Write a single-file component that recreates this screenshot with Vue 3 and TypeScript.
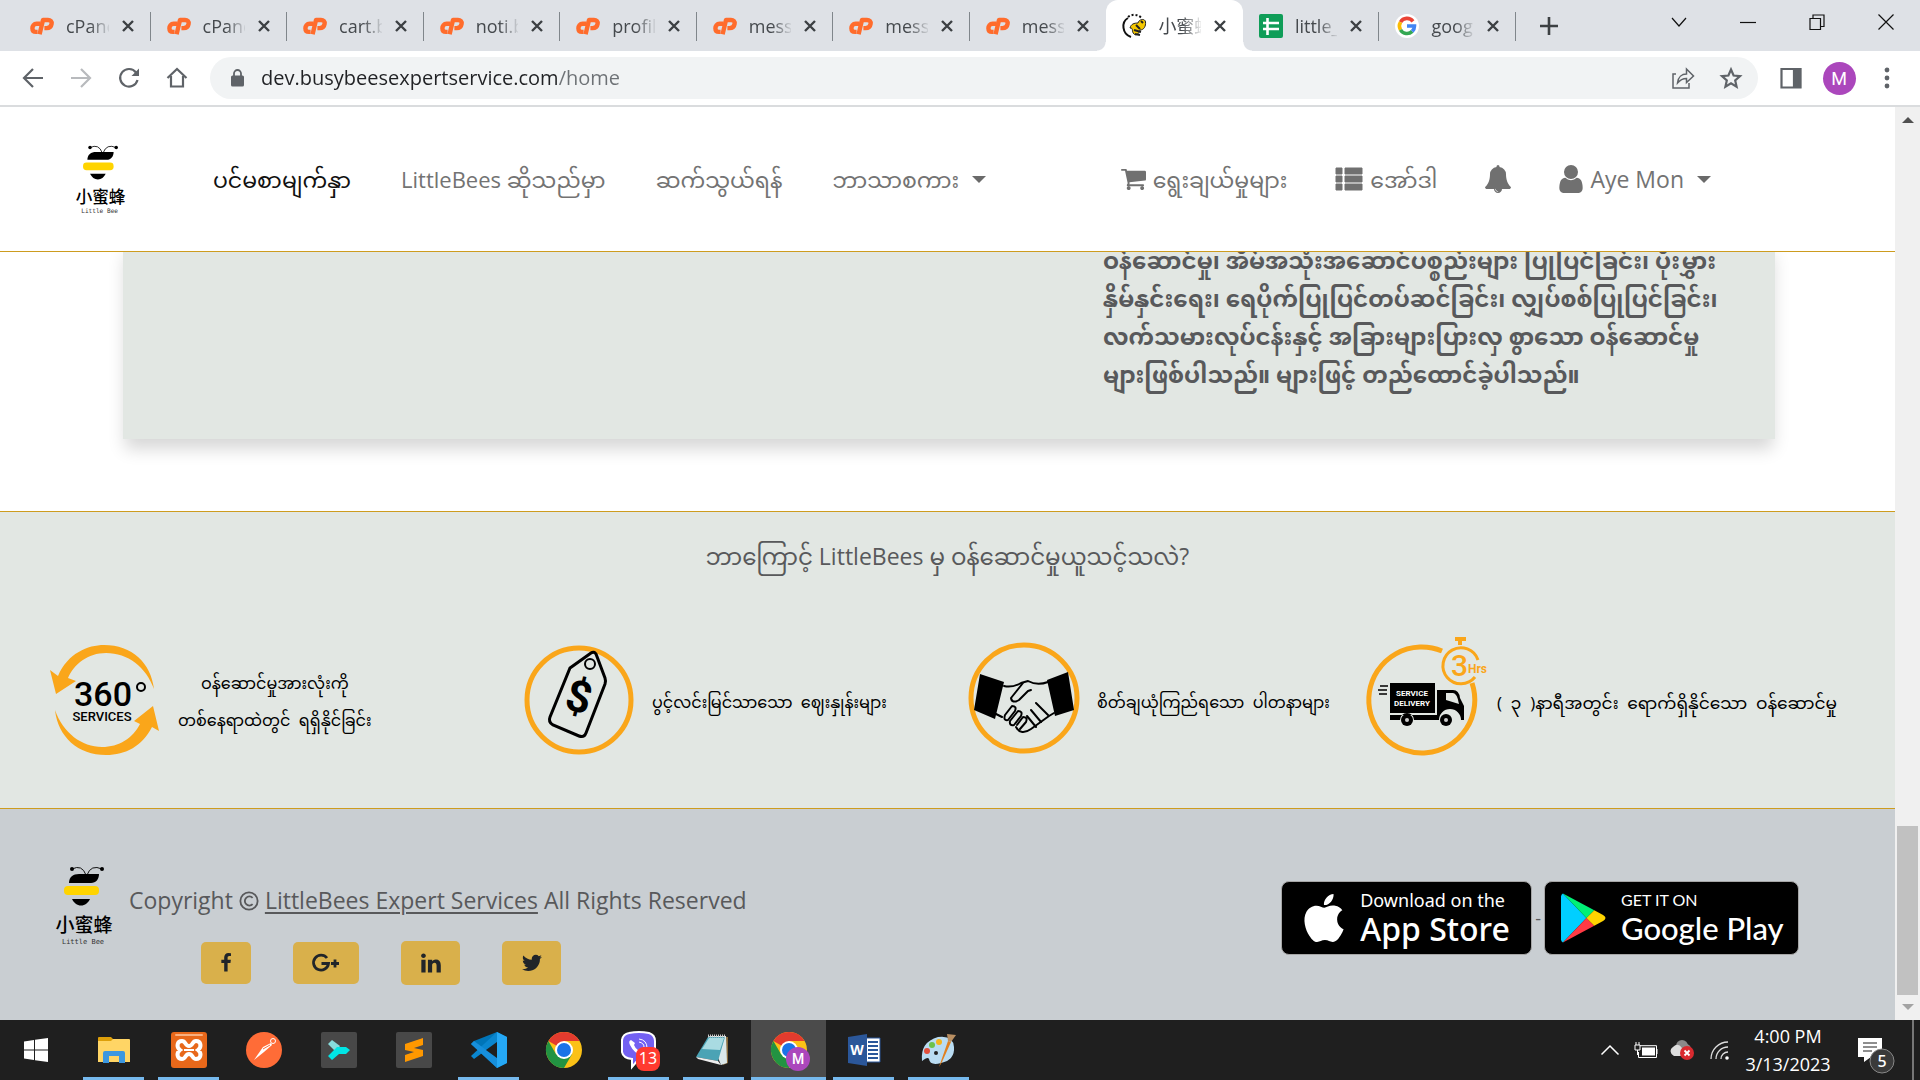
<script setup lang="ts">
import { ref } from 'vue'

interface Tab {
  icon: 'cp' | 'bee' | 'sheet' | 'google'
  title: string
  active?: boolean
}

const tabs: Tab[] = [
  { icon: 'cp', title: 'cPanel' },
  { icon: 'cp', title: 'cPanel' },
  { icon: 'cp', title: 'cart.blade' },
  { icon: 'cp', title: 'noti.blade' },
  { icon: 'cp', title: 'profile' },
  { icon: 'cp', title: 'messages' },
  { icon: 'cp', title: 'messages' },
  { icon: 'cp', title: 'messages' },
  { icon: 'bee', title: '小蜜蜂', active: true },
  { icon: 'sheet', title: 'little_bee' },
  { icon: 'google', title: 'google' },
]

const url = ref('dev.busybeesexpertservice.com/home')

interface App {
  name: string
  open?: boolean
  active?: boolean
}

const apps: App[] = [
  { name: 'explorer', open: true },
  { name: 'xampp', open: true },
  { name: 'postman' },
  { name: 'terminal' },
  { name: 'sublime' },
  { name: 'vscode', open: true },
  { name: 'chrome' },
  { name: 'viber', open: true },
  { name: 'notepad', open: true },
  { name: 'chrome-m', open: true, active: true },
  { name: 'word', open: true },
  { name: 'paint', open: true },
]
</script>

<template>
  <div class="screen">
    <header class="strip">
      <div class="tabs">
        <div v-for="(tab, i) in tabs" :key="i" class="tab" :class="{ active: tab.active, before: tabs[i + 1]?.active }">
          <svg class="fav" viewBox="0 0 24 24">
            <g v-if="tab.icon === 'cp'" fill="none" stroke="#ff6c2c" stroke-width="4.4" stroke-linejoin="round">
              <path d="M10.500 9.700H6.600C3.900 9.700 2.400 12 2.400 14.200C2.400 16.600 3.800 17.900 6 17.900H7.600" />
              <path d="M9.600 20.300L13 6H18C20.500 6 22 7.600 21.600 9.900C21.200 12.600 19.300 14.100 16.600 14.100H14.400" />
            </g>
            <g v-else-if="tab.icon === 'bee'">
              <path d="M6 4C-1 8 0 20 9 23" fill="none" stroke="#111" stroke-width="2" />
              <path d="M6 3C10 0 15 0 19 3.500" fill="none" stroke="#111" stroke-width="2" stroke-dasharray="2 2" />
              <path d="M16 9C17 5 23 4 23.500 8C24 12 22 16 18 16C17 20 14 22 12 20C9 17 12 14 8 14C9 10 12 9 16 9Z" fill="#f5c800" stroke="#222" />
              <path d="M12 16L19 18M13 20L18 21M14 11L18 15M19 7L21 9" stroke="#222" stroke-width="2" />
            </g>
            <g v-else-if="tab.icon === 'sheet'">
              <rect width="24" height="24" rx="2" fill="#0f9d58" />
              <path d="M4 9H20M8.500 4V21M4 15H20" stroke="#fff" stroke-width="2.600" fill="none" />
            </g>
            <g v-else>
              <circle cx="12" cy="12" r="12" fill="#fff" />
              <g fill="none" stroke-width="3.600">
                <path d="M18 7.300A7.500 7.500 0 0 0 5.500 8.200" stroke="#ea4335" />
                <path d="M5.500 8.200A7.500 7.500 0 0 0 5.500 15.800" stroke="#fbbc05" />
                <path d="M5.500 15.800A7.500 7.500 0 0 0 17.200 17.400" stroke="#34a853" />
                <path d="M17.200 17.400A7.500 7.500 0 0 0 19.500 12H12" stroke="#4285f4" />
              </g>
            </g>
          </svg>
          <span class="title">{{ tab.title }}</span>
          <button class="close" aria-label="Close tab">
            <svg viewBox="0 0 14 14"><path d="M2 2L12 12M12 2L2 12" /></svg>
          </button>
        </div>
      </div>
      <button class="plus" aria-label="New tab">
        <svg viewBox="0 0 18 18"><path d="M9 0V18M0 9H18" /></svg>
      </button>
      <div class="wincontrols">
        <button aria-label="Search tabs"><svg viewBox="0 0 16 16"><path d="M1 4L8 12L15 4" /></svg></button>
        <button aria-label="Minimize"><svg viewBox="0 0 16 16"><path d="M0 8.500H16" /></svg></button>
        <button aria-label="Restore"><svg viewBox="0 0 16 16"><path d="M1 4.500H11.500V15.500H1ZM4 4.500V1H15V12.500H11.500" /></svg></button>
        <button aria-label="Close"><svg viewBox="0 0 16 16"><path d="M0.500 0.500L15.500 15.500M15.500 0.500L0.500 15.500" /></svg></button>
      </div>
    </header>

    <div class="toolbar">
      <button class="tool" aria-label="Back"><svg viewBox="0 0 24 24"><path d="M22 12H3M12 3L3 12L12 21" /></svg></button>
      <button class="tool dim" aria-label="Forward"><svg viewBox="0 0 24 24"><path d="M2 12H21M12 3L21 12L12 21" /></svg></button>
      <button class="tool" aria-label="Reload"><svg viewBox="0 0 24 24"><path d="M19 6.500A8.800 8.800 0 1 0 20.500 14" /><path d="M22 2.500V10H14.500Z" class="tip" /></svg></button>
      <button class="tool" aria-label="Home"><svg viewBox="0 0 24 24"><path d="M2.500 12L12 3L21.500 12M6 10V20.500H18V10" /></svg></button>
      <div class="omnibox">
        <svg class="lock" viewBox="0 0 13 18"><rect y="6.500" width="13" height="11" rx="1.500" fill="#5f6368" /><path d="M3 7V4.500A3.500 3.500 0 0 1 10 4.500V7" fill="none" stroke="#5f6368" stroke-width="1.800" /></svg>
        <input v-model="url" class="url" aria-label="Address" type="text" />
        <button class="tool" aria-label="Share"><svg class="thin" viewBox="0 0 24 24"><path d="M5 8H2V22H18V17" /><path d="M6.500 17C7 11 11 8 15.500 8V3L22.500 10L15.500 16.500V12.500C11.500 12.500 9 14 6.500 17Z" /></svg></button>
        <button class="tool" aria-label="Bookmark"><svg viewBox="0 0 24 24"><path d="M12 3.500L14.600 9.500L21 10.100L16.200 14.400L17.600 20.700L12 17.400L6.400 20.700L7.800 14.400L3 10.100L9.400 9.500Z" /></svg></button>
      </div>
      <button class="tool" aria-label="Side panel"><svg viewBox="0 0 24 24"><path d="M2.500 3H21.500V21.500H2.500Z" /><path class="solid" d="M15 3H21V21H15Z" /></svg></button>
      <button class="tool" aria-label="Profile"><span class="avatar">M</span></button>
      <button class="tool" aria-label="Menu"><svg viewBox="0 0 24 24"><circle class="solid" cx="12" cy="4" r="1.300" /><circle class="solid" cx="12" cy="12" r="1.300" /><circle class="solid" cx="12" cy="20" r="1.300" /></svg></button>
    </div>

    <div class="viewport">
      <div class="page">
        <nav class="navbar">
          <a class="brand" href="#" aria-label="Little Bee">
            <svg class="logo" viewBox="0 0 56 79">
              <g fill="none" stroke="#111" stroke-width="1"><path d="M16 3Q26 -2 30 9M46 3Q35 -2 31 9" /></g>
              <circle cx="16" cy="3" r="2" /><circle cx="46" cy="3" r="2" />
              <path d="M13 17C13 11 17 8 23 8H43C43 13 40 17 35 17Z" />
              <rect x="8" y="20" width="35" height="9" rx="4" fill="#ffd400" />
              <path d="M16 33H34C32 37 29 39.500 25 39.500S18 37 16 33Z" />
              <text x="28" y="66" class="zh">小蜜蜂</text>
              <text x="27" y="78" class="en">Little Bee</text>
            </svg>
          </a>
          <div class="links">
            <a class="current" href="#">ပင်မစာမျက်နှာ</a>
            <a href="#">LittleBees ဆိုသည်မှာ</a>
            <a href="#">ဆက်သွယ်ရန်</a>
            <a href="#">ဘာသာစကား<i class="caret"></i></a>
          </div>
          <div class="account">
            <a href="#"><svg class="fa" viewBox="64 128 1664 1664"><path d="M704 1536q0 52-38 90t-90 38-90-38-38-90 38-90 90-38 90 38 38 90zm896 0q0 52-38 90t-90 38-90-38-38-90 38-90 90-38 90 38 38 90zm128-1088v512q0 24-16.500 42.500t-40.500 21.500l-1044 122q13 60 13 70 0 16-24 64h920q26 0 45 19t19 45-19 45-45 19h-1024q-26 0-45-19t-19-45q0-11 8-31.500t16-36 21.500-40 15.500-29.500l-177-823h-204q-26 0-45-19t-19-45 19-45 45-19h256q16 0 28.500 6.500t19.500 15.500 13 24.500 8 26 5.500 29.500 4.500 26h1201q26 0 45 19t19 45z" /></svg>ရွေးချယ်မှုများ</a>
            <a href="#"><svg class="fa wide" viewBox="0 0 28 22"><path d="M1 0H7V6H1ZM10 0H27V6H10ZM1 8H7V14H1ZM10 8H27V14H10ZM1 16H7V22H1ZM10 16H27V22H10Z" stroke="#707070" stroke-linejoin="round" /></svg>အော်ဒါ</a>
            <a href="#" aria-label="Notifications"><svg class="fa bell" viewBox="64 0 1664 1792"><path d="M912 1696q0-16-16-16-59 0-101.500-42.500t-42.500-101.500q0-16-16-16t-16 16q0 73 51.500 124.500t124.500 51.500q16 0 16-16zm816-288q0 52-38 90t-90 38h-448q0 106-75 181t-181 75-181-75-75-181h-448q-52 0-90-38t-38-90q50-42 91-88t85-119.500 74.500-158.500 50-206 19.500-260q0-152 117-282.500t307-158.500q-8-19-8-39 0-40 28-68t68-28 68 28 28 68q0 20-8 39 190 28 307 158.500t117 282.500q0 139 19.500 260t50 206 74.500 158.500 85 119.500 91 88z" /></svg></a>
            <a class="name" href="#"><svg class="fa user" viewBox="256 128 1280 1536"><path d="M1536 1399q0 109-62.500 187t-150.500 78h-854q-88 0-150.500-78t-62.500-187q0-85 8.500-160.500t31.500-152 58.500-131 94-89 134.500-34.500q131 128 313 128t313-128q76 0 134.500 34.500t94 89 58.500 131 31.500 152 8.500 160.500zm-256-887q0 159-112.500 271.500t-271.500 112.500-271.500-112.500-112.500-271.500 112.500-271.500 271.500-112.500 271.500 112.500 112.500 271.500z" /></svg>Aye Mon<i class="caret"></i></a>
          </div>
        </nav>

        <main>
          <section class="card">
            <p>ဝန်ဆောင်မှု၊ အိမ်အသုံးအဆောင်ပစ္စည်းများ ပြုပြင်ခြင်း၊ ပိုးမွှား<br />နှိမ်နှင်းရေး၊ ရေပိုက်ပြုပြင်တပ်ဆင်ခြင်း၊ လျှပ်စစ်ပြုပြင်ခြင်း၊<br />လက်သမားလုပ်ငန်းနှင့် အခြားများပြားလှ စွာသော ဝန်ဆောင်မှု<br />များဖြစ်ပါသည်။ များဖြင့် တည်ထောင်ခဲ့ပါသည်။</p>
          </section>

          <section class="why">
            <h2>ဘာကြောင့် LittleBees မှ ဝန်ဆောင်မှုယူသင့်သလဲ?</h2>
            <div class="features">
              <div class="feature">
                <svg class="badge" viewBox="0 0 110 110">
                  <path d="M0 25L8 31C18 8 38 0 54 0C82 0 101 18 104 44C96 22 78 8 56 8C38 8 24 19 18 33L26 36L6 49Z" fill="#faa61a" />
                  <path d="M5 65C13 88 32 102 52 102C69 102 83 93 90 79L84 76L103 61L109 86L102 82C92 101 76 110 56 110C28 110 8 92 5 65Z" fill="#faa61a" />
                  <text class="n360"><tspan x="53" y="61">360</tspan><tspan x="52" y="76" class="services">SERVICES</tspan></text>
                  <circle cx="91" cy="42" r="4" fill="none" stroke="#000" stroke-width="2" />
                </svg>
                <p class="two">ဝန်ဆောင်မှုအားလုံးကို<br />တစ်နေရာထဲတွင်&nbsp; ရရှိနိုင်ခြင်း</p>
              </div>
              <div class="feature">
                <svg class="badge" viewBox="0 0 110 110">
                  <circle cx="55" cy="55" r="52" fill="none" stroke="#faa61a" stroke-width="5" />
                  <path d="M46 23L67 8Q70 6 72 9L81 33Q82 36 81 39L62 88Q60 93 55 91L29 80Q24 77 26 72Z" fill="none" stroke="#000" stroke-width="3" />
                  <circle cx="66" cy="19" r="5" fill="none" stroke="#000" stroke-width="2" />
                  <text x="55" y="67" class="dollar" transform="rotate(14 55 52)">$</text>
                </svg>
                <p>ပွင့်လင်းမြင်သာသော&nbsp; ဈေးနှုန်းများ</p>
              </div>
              <div class="feature">
                <svg class="badge" viewBox="0 0 110 110">
                  <circle cx="55" cy="53" r="53" fill="none" stroke="#faa61a" stroke-width="5" />
                  <path d="M11 29L35 37L26 74L5 65ZM99 27L78 35L86 71L105 65Z" />
                  <g fill="none" stroke="#000" stroke-width="2" stroke-linecap="round" stroke-linejoin="round">
                    <path d="M35 41Q43 43 52 38L59 36Q68 41 79 37M54 38L42 53Q43 59 50 55L59 46L62 45M27 69L33 72M85 68L80 71L62 84Q52 91 47 82" />
                    <path d="M36 70L43 61Q48 61 46 66L39 75Q34 76 36 70M41 76L49 66Q54 66 52 71L45 80Q40 81 41 76M48 80L54 72Q59 72 57 77L51 84M62 65L72 77M58 71L67 82M67 58L79 70" />
                  </g>
                </svg>
                <p>စိတ်ချယုံကြည်ရသော&nbsp; ပါတနာများ</p>
              </div>
              <div class="feature">
                <svg class="badge" viewBox="0 -2 110 110">
                  <path d="M73 4A53 53 0 1 0 103 36" fill="none" stroke="#faa61a" stroke-width="5" />
                  <g fill="none" stroke="#faa61a" stroke-width="3"><path d="M109 13A18 18 0 1 0 106 30" /><path d="M91 -2V-8M86 -8H97" stroke-width="4" /></g>
                  <text class="three"><tspan x="82" y="29">3</tspan><tspan x="99" y="26" class="hrs">Hrs</tspan></text>
                  <path d="M21 36H66V66H21ZM68 43H84Q90 43 91 51L95 59V73H92A7 7 0 0 0 70 73H45A7 7 0 0 0 31 73H21V68H68Z" />
                  <path d="M77 46H84Q88 46 90 57L77 53Z" fill="#e2e7e3" />
                  <circle cx="38" cy="73" r="6" /><circle cx="77" cy="73" r="6" />
                  <circle cx="38" cy="73" r="2" fill="#ccc" /><circle cx="77" cy="73" r="2" fill="#ccc" />
                  <path d="M11 39H19M9 43H18M10 47H18" stroke="#000" stroke-width="1.500" />
                  <text x="43" y="49" class="truck">SERVICE</text>
                  <text x="43" y="59" class="truck">DELIVERY</text>
                </svg>
                <p class="long">(&nbsp; ၃ &nbsp;)နာရီအတွင်း&nbsp; ရောက်ရှိနိုင်သော&nbsp; ဝန်ဆောင်မှု</p>
              </div>
            </div>
          </section>
        </main>

        <footer class="foot">
          <svg class="logo big" viewBox="0 0 56 79">
            <g fill="none" stroke="#111" stroke-width="1"><path d="M16 3Q26 -2 30 9M46 3Q35 -2 31 9" /></g>
            <circle cx="16" cy="3" r="2" /><circle cx="46" cy="3" r="2" />
            <path d="M13 17C13 11 17 8 23 8H43C43 13 40 17 35 17Z" />
            <rect x="8" y="20" width="35" height="9" rx="4" fill="#ffd400" />
            <path d="M16 33H34C32 37 29 39.500 25 39.500S18 37 16 33Z" />
            <text x="28" y="66" class="zh">小蜜蜂</text>
            <text x="27" y="78" class="en">Little Bee</text>
          </svg>
          <div class="legal">
            <p>Copyright <svg class="copy" viewBox="0 0 22 22"><circle cx="11" cy="11" r="9.500" /><path d="M15 7.500A5 5 0 1 0 15 14.500" /></svg> <a href="#">LittleBees Expert Services</a> All Rights Reserved</p>
            <div class="social">
              <button class="fb" aria-label="Facebook"><svg viewBox="0 0 1792 1792"><path d="M1343 12v264h-157q-86 0-116 36t-30 108v189h293l-39 296h-254v759h-306v-759h-255v-296h255v-218q0-186 104-288.500t277-102.500q147 0 228 12z" /></svg></button>
              <button class="gp" aria-label="Google Plus"><svg viewBox="0 0 28 20"><path d="M15 5A7.500 7.500 0 1 0 16.500 10.500H9.500M23 6.500V14.500M19 10.500H27" fill="none" stroke="#212529" stroke-width="2.800" /></svg></button>
              <button class="li" aria-label="LinkedIn"><svg viewBox="120 120 1560 1520"><path d="M477 625v991h-330v-991h330zm21-306q1 73-50.500 122t-135.500 49h-2q-82 0-132-49t-50-122q0-74 51.500-122.500t134.500-48.500 133 48.500 51 122.500zm1166 729v568h-329v-530q0-105-40.500-164.500t-126.500-59.500q-63 0-105.500 34.500t-63.500 85.500q-11 30-11 81v553h-329q2-399 2-647t-1-296l-1-48h329v144h-2q20-32 41-56t56.500-52 87-43.500 114.500-15.500q171 0 275 113.500t104 332.500z" /></svg></button>
              <button class="tw" aria-label="Twitter"><svg viewBox="108 200 1580 1400"><path d="M1684 408q-67 98-162 167 1 14 1 42 0 130-38 259.500t-115.500 248.500-184.500 210.500-258 146-323 54.500q-271 0-496-145 35 4 78 4 225 0 401-138-105-2-188-64.500t-114-159.500q33 5 61 5 43 0 85-11-112-23-185.500-111.500t-73.500-205.500v-4q68 38 146 41-66-44-105-115t-39-154q0-88 44-163 121 149 294.500 238.500t371.500 99.500q-8-38-8-74 0-134 94.500-228.500t228.500-94.500q140 0 236 102 109-21 205-78-37 115-142 178 93-10 186-50z" /></svg></button>
            </div>
          </div>
          <div class="stores">
            <a class="store apple" href="#">
              <svg viewBox="0 0 24 24"><path fill="#fff" d="M12.152 6.896c-.948 0-2.415-1.078-3.960-1.040-2.040.027-3.910 1.183-4.961 3.014-2.117 3.675-.546 9.103 1.519 12.090 1.013 1.454 2.208 3.090 3.792 3.039 1.520-.065 2.090-.987 3.935-.987 1.831 0 2.350.987 3.960.948 1.637-.026 2.676-1.480 3.676-2.948 1.156-1.688 1.636-3.325 1.662-3.415-.039-.013-3.182-1.221-3.220-4.857-.026-3.040 2.480-4.494 2.597-4.559-1.429-2.090-3.623-2.324-4.390-2.376-2-.156-3.675 1.090-4.610 1.090zM15.530 3.830c.843-1.012 1.400-2.427 1.245-3.830-1.207.052-2.662.805-3.532 1.818-.780.896-1.454 2.338-1.273 3.714 1.338.104 2.715-.688 3.559-1.701" /></svg>
              <span><small>Download on the</small><b>App Store</b></span>
            </a>
            <span class="dash">-</span>
            <a class="store play" href="#">
              <svg viewBox="0 0 46 50">
                <path d="M2 0Q0 1 0 3V47Q0 49 2 50L26 25Z" fill="#00cfff" />
                <path d="M2 0L34 17L26 25Z" fill="#00f076" />
                <path d="M2 50L34 33L26 25Z" fill="#ff3a44" />
                <path d="M34 17L43 22Q48 25 43 28L34 33L26 25Z" fill="#ffd400" />
              </svg>
              <span><small>GET IT ON</small><b>Google Play</b></span>
            </a>
          </div>
        </footer>
      </div>
      <div class="scrollbar">
        <svg class="up" viewBox="0 0 12 6"><path d="M6 0L12 6H0Z" /></svg>
        <div class="thumb"></div>
        <svg class="down" viewBox="0 0 12 6"><path d="M6 6L12 0H0Z" /></svg>
      </div>
    </div>

    <div class="taskbar">
      <button class="start" aria-label="Start"><svg viewBox="0 0 24 24" fill="#fff"><path d="M0 3.500L10 2V11.400H0ZM11 1.800L24 0V11.400H11ZM0 12.600H10V22L0 20.500ZM11 12.600H24V24L11 22.200Z" /></svg></button>
      <button v-for="app in apps" :key="app.name" class="app" :class="{ open: app.open, on: app.active }" :aria-label="app.name">
        <svg viewBox="0 0 36 36">
          <g v-if="app.name === 'explorer'">
            <path d="M2 6Q2 5 3 5H15L17 7V12H2Z" fill="#dd9f0a" />
            <path d="M2 9H15L17 7H33Q34 7 34 8V30H2Z" fill="#ffd565" />
            <path d="M7 31V21Q7 19 9 19H27Q29 19 29 21V31H23V24H13V31Z" fill="#3c97e0" />
          </g>
          <g v-else-if="app.name === 'xampp'">
            <rect width="36" height="36" rx="3" fill="#e8681a" /><rect x="4" y="2" width="28" height="2" rx="1" fill="#f8b080" />
            <path d="M11 9C6 9 5 15 9 18C5 21 6 27 11 27C15 27 14 22 18 22S21 27 25 27C30 27 31 21 27 18C31 15 30 9 25 9C21 9 22 14 18 14S15 9 11 9Z" fill="none" stroke="#fff" stroke-width="4" />
            <path d="M13 18H23" stroke="#fff" stroke-width="2" />
          </g>
          <g v-else-if="app.name === 'postman'">
            <circle cx="18" cy="18" r="18" fill="#ff6c37" />
            <circle cx="27" cy="9" r="2.500" fill="none" stroke="#fff" />
            <path d="M8 28L17 15L25 11L26 13L18 20Z" fill="#fff" /><path d="M17 17L24 13" stroke="#ff6c37" />
          </g>
          <g v-else-if="app.name === 'terminal'">
            <rect width="36" height="36" rx="2" fill="#484848" />
            <path d="M7 12L11 8L19 14L15 20Z" fill="#86dcdc" /><path d="M7 24L16 15H25L29 18L25 22H18L11 28Z" fill="#00e5e5" />
          </g>
          <g v-else-if="app.name === 'sublime'">
            <rect width="36" height="36" rx="2" fill="#484848" />
            <path d="M9 12L27 6V13L18 16L27 18V24L9 30V23L18 20L9 18Z" fill="#ff9800" />
          </g>
          <g v-else-if="app.name === 'vscode'">
            <path d="M26 0L36 5V31L26 36L0 12L3 9Z" fill="#0075b8" /><path d="M26 0L0 24L3 27L26 10Z" fill="#0a86cf" /><path d="M0 12L3 9L26 26V36Z" fill="#178fdc" /><path d="M26 0L36 5V31L26 36Z" fill="#25a8f5" /><path d="M26 10V26L15 18Z" fill="#1f1f1f" />
          </g>
          <g v-else-if="app.name === 'chrome' || app.name === 'chrome-m'">
            <circle cx="18" cy="18" r="18" fill="#fbc116" />
            <path d="M18 18L2.400 9A18 18 0 0 1 33.600 9H18Z" fill="#e33b2e" />
            <path d="M2.400 9A18 18 0 0 0 18 36L25.800 22.500L18 18L10.200 22.500Z" fill="#229342" />
            <circle cx="18" cy="18" r="9" fill="#fff" /><circle cx="18" cy="18" r="7" fill="#1a73e8" />
            <g v-if="app.name === 'chrome-m'"><circle cx="27" cy="27" r="12" fill="#ab47bc" /><text x="27" y="32" class="mm">M</text></g>
          </g>
          <g v-else-if="app.name === 'viber'">
            <path d="M8 1Q18 -1 28 1Q34 3 34 9V20Q34 26 28 27L17 28L11 35V27Q2 26 1 20V8Q2 2 8 1Z" fill="#7360f2" stroke="#fff" stroke-width="2" />
            <path d="M10 8Q7 9 9 13Q13 21 20 23L23 19L19 17L17 18Q14 16 13 13L14 11Z" fill="#fff" />
            <path d="M18 7Q26 8 26 16M18 10Q23 11 23 15" fill="none" stroke="#fff" />
            <rect x="15" y="15" width="24" height="24" rx="8" fill="#ff3a30" /><text x="27" y="32" class="count">13</text>
          </g>
          <g v-else-if="app.name === 'notepad'">
            <path d="M29 5H32V31L27 33Z" fill="#8a6c3c" /><path d="M13 4H30L31 31L25 33Z" fill="#dbe8ea" /><path d="M12 5H29L22 29L0 25Z" fill="#4ba3b5" /><path d="M13 6H28L24 18L6 17Z" fill="#a9dbe2" /><path d="M0 25L22 29L25 33L2 27Z" fill="#eee" /><path d="M12 4H30" stroke="#ccc" stroke-width="3" stroke-dasharray="1 1" />
          </g>
          <g v-else-if="app.name === 'word'">
            <path d="M20 6H34V30H20Z" fill="#fff" stroke="#2b579a" /><path d="M22 10H32M22 14H32M22 18H32M22 22H32M22 26H32" stroke="#2b579a" stroke-width="2" /><path d="M2 5L21 2V34L2 31Z" fill="#2b579a" /><text x="11" y="23" class="word">W</text>
          </g>
          <g v-else>
            <path d="M1 29Q-1 10 17 5Q32 3 33 15Q34 28 20 31Q9 34 8 27Q7 24 1 29Z" fill="#b9dcf2" />
            <circle cx="6" cy="19" r="3" fill="#e2503c" /><circle cx="11" cy="13" r="3" fill="#6cc24a" /><circle cx="18" cy="10" r="3" fill="#f5b51e" /><circle cx="15" cy="21" r="2" fill="#222" />
            <path d="M18 35L27 9L30 10L21 30Z" fill="#e0801f" /><path d="M27 9L26 2L35 3L30 10Z" fill="#b98f62" />
          </g>
        </svg>
      </button>
      <div class="tray">
        <svg class="t-up" viewBox="0 0 18 10"><path d="M0.500 9.500L9 1L17.500 9.500" fill="none" stroke="#fff" stroke-width="1.500" /></svg>
        <svg class="t-bat" viewBox="0 0 24 17"><path d="M6 3.700H22.500V15.500H4.500V10" fill="none" stroke="#fff" /><rect x="8" y="5.500" width="13" height="8" fill="#fff" /><path d="M23 7V12M1 3V8H6V3ZM2 0V3M5 0V3M3.500 8V13" fill="none" stroke="#fff" /></svg>
        <svg class="t-cloud" viewBox="0 0 24 20"><circle cx="12" cy="6" r="6" fill="#8a8a8a" /><circle cx="16" cy="9" r="5" fill="#8a8a8a" /><path d="M4 16A5 5 0 0 1 3 7Q8 2 12 8L14 16Z" fill="#ddd" /><circle cx="17" cy="13" r="7" fill="#d92a2f" /><path d="M14.500 10.500L19.500 15.500M19.500 10.500L14.500 15.500" stroke="#fff" stroke-width="1.800" /></svg>
        <svg class="t-wifi" viewBox="0 0 19 19"><g fill="none" stroke="#ddd" stroke-width="1.300"><path d="M1 18A17 17 0 0 1 18 1M6 18A12 12 0 0 1 18 6M11 18A7 7 0 0 1 18 11" /></g><circle cx="17" cy="17" r="1.800" fill="#fff" /></svg>
        <div class="clock"><span>4:00 PM</span><span>3/13/2023</span></div>
        <svg class="t-note" viewBox="0 0 38 38"><path d="M1 1H25V20H14L7 25V20H1Z" fill="#fff" /><path d="M6 6H20M6 10H20M6 14H15" stroke="#1f1f1f" /><circle cx="25" cy="24" r="12" fill="#3a3a3a" stroke="#888" /><text x="25" y="30" class="five">5</text></svg>
        <div class="peek"></div>
      </div>
    </div>
  </div>
</template>

<style>
body { margin: 0; background: #1f1f1f; }
</style>

<style scoped>
* { box-sizing: border-box; }
.screen { display: flex; flex-direction: column; min-height: 100vh; overflow: hidden; font-family: "Segoe UI", "Open Sans", "Myanmar Text", "Noto Sans Myanmar", Padauk, "Noto Sans CJK SC", sans-serif; background: #fff; }
button { padding: 0; border: 0; background: none; font: inherit; }
svg { display: block; flex: none; overflow: visible; }

.strip { display: flex; height: 51px; padding-left: 14px; background: #dee1e6; }
.tabs { display: flex; flex: 0 1 1502px; min-width: 0; }
.tab { display: flex; align-items: center; flex: 1 1 0; min-width: 0; padding: 0 16px; position: relative; }
.tab::after { content: ""; position: absolute; right: 0; top: 12px; width: 1px; height: 29px; background: #80868b; }
.tab.before::after { display: none; }
.tab.active { background: #fff; border-radius: 12px 12px 0 0; }
.tab.active::before, .tab.active::after { content: ""; position: absolute; top: auto; bottom: 0; width: 9px; height: 9px; }
.tab.active::before { left: -9px; background: radial-gradient(circle at 0 0, transparent 8px, #fff 9px); }
.tab.active::after { right: -9px; background: radial-gradient(circle at 100% 0, transparent 8px, #fff 9px); }
.fav { width: 24px; height: 24px; }
.title { flex: 1; min-width: 0; margin: 0 12px; overflow: hidden; white-space: nowrap; font-size: 18px; line-height: 24px; color: #45494d; mask-image: linear-gradient(90deg, #000 55%, transparent 105%); }
.close svg { width: 14px; height: 14px; }
.close path { stroke: #3c4043; stroke-width: 2.400; }
.plus { width: 66px; display: grid; place-items: center; }
.plus svg { width: 18px; height: 18px; }
.plus path { stroke: #3c4043; stroke-width: 2.600; }
.wincontrols { display: flex; margin-left: auto; height: 44px; }
.wincontrols button { width: 69px; display: grid; place-items: center; }
.wincontrols svg { width: 16px; height: 16px; }
.wincontrols path { fill: none; stroke: #111; stroke-width: 1.200; }

.toolbar { display: flex; align-items: center; height: 56px; padding: 0 9px; border-bottom: 2px solid #dadcde; background: #fff; }
.tool { width: 48px; height: 42px; display: grid; place-items: center; }
.tool svg { width: 24px; height: 24px; fill: none; stroke: #5f6368; stroke-width: 2.200; }
.tool svg.thin { stroke-width: 1.500; }
.tool.dim svg { stroke: #b8babd; }
.solid { fill: #5f6368; }
.tip { fill: #5f6368; stroke: none; }
.omnibox { display: flex; align-items: center; flex: 1; height: 42px; margin: 0 9px; padding: 0 3px 0 21px; border-radius: 21px; background: #f1f3f4; }
.lock { width: 13px; height: 18px; }
.url { flex: 1; min-width: 0; height: 32px; margin: 0 0 0 17px; padding: 0; border: 0; outline: 0; font: 20px/32px "Segoe UI", "Open Sans", sans-serif; color: transparent; background: linear-gradient(90deg, #202124 297px, #6d7175 297px); background-clip: text; }
.avatar { width: 33px; height: 33px; border-radius: 50%; background: #ab47bc; color: #fff; font: 18px/33px Roboto, sans-serif; }

.viewport { display: flex; flex: 1; }
.page { display: flex; flex-direction: column; flex: 1; min-width: 0; }
.navbar { position: relative; z-index: 1; display: flex; align-items: center; height: 145px; padding: 0 184px 0 76px; border-bottom: 1px solid #cd9c1f; background: #fff; }
.navbar a { display: flex; align-items: center; color: #737373; text-decoration: none; white-space: nowrap; font-size: 22px; line-height: 38px; }
.navbar a.current { color: #111; }
.navbar a.name { font-size: 23px; }
.logo { width: 49px; height: 69px; }
.logo.big { width: 56px; height: 79px; }
.zh { font: 500 19px "Noto Sans CJK SC", sans-serif; text-anchor: middle; }
.en { font: 7px "DejaVu Sans Mono", monospace; text-anchor: middle; fill: #333; }
.links { display: flex; gap: 50px; margin-left: 88px; }
.account { display: flex; gap: 48px; margin-left: auto; }
.caret { width: 0; height: 0; margin-left: 13px; border: 7px solid transparent; border-top-color: #6a6a6a; border-bottom: 0; }
.fa { width: 25px; height: 25px; margin-right: 7px; fill: #707070; }
.fa.wide { width: 28px; height: 22px; }
.fa.bell { width: 26px; height: 28px; margin: 0; }
.fa.user { width: 24px; height: 28px; }

.card { display: grid; grid-template-columns: 980fr 672fr; margin: -11px 120px 72px 123px; padding-bottom: 46px; background: #e2e7e3; box-shadow: 0 12px 16px -2px rgba(0, 0, 0, 0.16); }
.card p { grid-column: 2; margin: 0; font-size: 23px; font-weight: 700; line-height: 38px; color: #58595b; white-space: nowrap; }
.why { height: 298px; padding-top: 25px; border-top: 1px solid #cd9c1f; border-bottom: 1px solid #cd9c1f; background: #e2e7e3; }
h2 { margin: 0; text-align: center; font-size: 23px; font-weight: 400; line-height: 38px; color: #58595b; }
.features { display: grid; grid-template-columns: 474fr 445fr 400fr 526fr; padding-left: 50px; margin-top: 70px; }
.feature { display: flex; align-items: center; gap: 18px; min-width: 0; white-space: nowrap; }
.feature p { margin: 0; padding-top: 4px; font-size: 16px; line-height: 37px; color: #000; }
.feature .long { font-size: 17px; }
.two { text-align: center; }
.badge { width: 110px; height: 110px; }
.n360 { font: 500 34px Roboto, sans-serif; text-anchor: middle; }
.services { font: 500 13px Roboto, sans-serif; text-anchor: middle; }
.dollar { font: 700 44px Roboto, sans-serif; text-anchor: middle; }
.three { font: 500 30px Roboto, sans-serif; fill: #faa61a; }
.hrs { font: 700 12px Roboto, sans-serif; }
.truck { font: 700 8px Roboto, sans-serif; text-anchor: middle; fill: #fff; }

.foot { display: flex; align-items: flex-start; flex: 1; padding: 57px 96px 35px 56px; background: #c9ced2; }
.legal { margin-left: 17px; }
.legal p { margin: 15px 0 0; font-size: 23px; line-height: 38px; color: #58595b; white-space: nowrap; }
.legal a { color: inherit; text-underline-offset: 3px; }
.copy { display: inline-block; width: 20px; height: 20px; vertical-align: -2px; fill: none; stroke: #58595b; stroke-width: 2; }
.social { display: flex; align-items: center; gap: 42px; margin: 22px 0 0 72px; }
.social button { display: grid; place-items: center; width: 59px; height: 44px; border-radius: 5px; background: #d9b04b; }
.social svg { width: 20px; height: 20px; fill: #212529; }
.social .fb { width: 50px; height: 42px; }
.social .gp { width: 66px; height: 42px; }
.social .gp svg { width: 28px; }
.stores { display: flex; align-items: center; gap: 3px; margin: 15px 0 0 auto; }
.store { display: flex; align-items: center; height: 74px; border: 1px solid #a6a6a6; border-radius: 8px; background: #000; color: #fff; text-decoration: none; white-space: nowrap; }
.store span, .store small, .store b { display: block; }
.apple { width: 251px; padding-left: 18px; font-family: "Noto Sans", sans-serif; }
.apple svg { width: 48px; height: 48px; }
.apple span { margin-left: 12px; }
.apple small { font-size: 18px; line-height: 22px; }
.apple b { font-size: 32px; font-weight: 500; line-height: 36px; }
.play { width: 255px; padding-left: 16px; font-family: Lato, sans-serif; }
.play svg { width: 45px; height: 50px; }
.play span { margin-left: 15px; }
.play small { font-size: 16px; line-height: 20px; }
.play b { font-size: 31px; font-weight: 500; line-height: 36px; }
.dash { font-size: 18px; color: #58595b; }

.scrollbar { display: flex; flex-direction: column; align-items: center; width: 25px; padding: 10px 0; background: #f0f0f0; }
.scrollbar svg { width: 12px; height: 6px; fill: #505050; }
.scrollbar .down { fill: #a3a3a3; margin-top: 9px; }
.thumb { width: 21px; height: 169px; margin-top: auto; background: #c1c1c1; }

.taskbar { display: flex; height: 60px; background: #1f1f1f; color: #fff; }
.start { width: 76px; display: grid; place-items: center start; padding-left: 24px; }
.start svg { width: 24px; height: 24px; }
.app { position: relative; width: 75px; display: grid; place-items: center; }
.app svg { width: 36px; height: 36px; }
.app.open::after { content: ""; position: absolute; left: 7px; right: 7px; bottom: 0; height: 3px; background: #76b9ed; }
.app.on { background: #4b4b4b; }
.app.on::after { left: 0; right: 0; }
.mm { font: 500 14px Roboto, sans-serif; text-anchor: middle; fill: #fff; }
.count { font: 16px "Noto Sans", sans-serif; text-anchor: middle; fill: #fff; }
.word { font: 700 14px "Noto Sans", sans-serif; text-anchor: middle; fill: #fff; }
.five { font: 500 16px "Noto Sans", sans-serif; text-anchor: middle; fill: #fff; }
.tray { display: flex; align-items: center; margin-left: auto; }
.t-up { width: 18px; height: 10px; }
.t-bat { width: 24px; height: 17px; margin-left: 15px; }
.t-cloud { width: 24px; height: 20px; margin-left: 12px; }
.t-wifi { width: 19px; height: 19px; margin-left: 16px; }
.clock { display: flex; flex-direction: column; align-items: center; margin-left: 15px; width: 88px; font-size: 18px; line-height: 28px; white-space: nowrap; }
.t-note { width: 38px; height: 38px; margin: 12px 0 0 25px; }
.peek { align-self: stretch; width: 8px; margin-left: 17px; border-left: 2px solid #777; }
</style>
